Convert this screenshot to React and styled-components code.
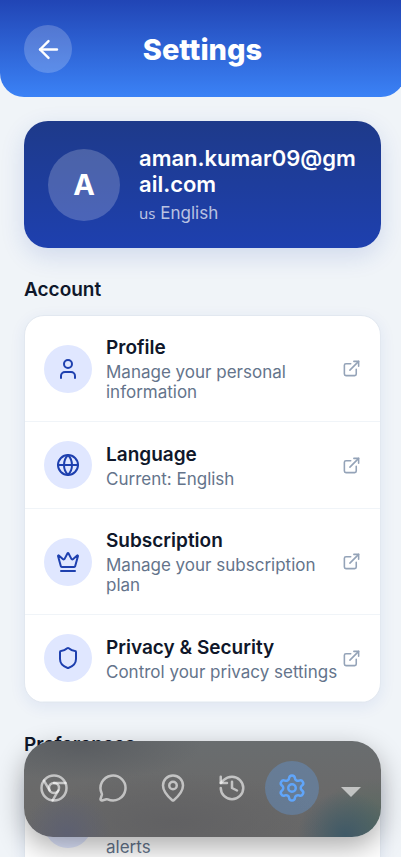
import React, { useState } from "react";
import styled, { createGlobalStyle } from "styled-components";
import {
  ArrowLeft,
  User,
  Globe,
  Crown,
  Shield,
  Bell,
  ExternalLink,
  MessageCircle,
  MapPin,
  History,
  Settings,
} from "lucide-react";

const GlobalStyle = createGlobalStyle`
  html {
    scrollbar-width: none;
  }

  body {
    margin: 0;
    overflow-x: hidden;
    background: #f0f4f8;
    font-family: Inter, "Liberation Sans", sans-serif;
    color: #0f172a;
  }

  * {
    box-sizing: border-box;
  }
`;

// the page bleeds slightly over the right edge of the window
const Page = styled.div`
  margin-right: -4px;
  padding-bottom: 140px;
`;

const Header = styled.header`
  display: grid;
  grid-template-columns: 48px 1fr 48px;
  align-items: center;
  padding: 25px 24px 24px;
  border-radius: 0 0 24px 24px;
  background: linear-gradient(#2145b5, #3b82f6);
`;

const Title = styled.h1`
  margin: 0;
  padding-top: 2px;
  font-size: 29px;
  line-height: 36px;
  font-weight: 800;
  text-align: center;
  color: white;
`;

const BackButton = styled.button`
  display: flex;
  align-items: center;
  justify-content: center;
  width: 48px;
  height: 48px;
  padding: 0;
  border: 0;
  border-radius: 50%;
  background: rgba(255, 255, 255, 0.2);
  color: white;
  cursor: pointer;
`;

const Content = styled.main`
  padding: 24px;
`;

const ProfileCard = styled.section`
  display: flex;
  align-items: center;
  gap: 19px;
  padding: 24px;
  border-radius: 24px;
  background: linear-gradient(#1e3a8a, #1e40af);
  box-shadow: 0 8px 24px rgba(30, 64, 175, 0.15);
  color: white;
`;

const Avatar = styled.div`
  display: flex;
  flex-shrink: 0;
  align-items: center;
  justify-content: center;
  width: 72px;
  height: 72px;
  border-radius: 50%;
  background: rgba(255, 255, 255, 0.2);
  font-size: 29px;
  font-weight: 700;
`;

const Email = styled.h2`
  margin: 0 0 5px;
  font-size: 22px;
  line-height: 26px;
  font-weight: 600;
  word-break: break-all;
`;

const Locale = styled.p`
  margin: 0;
  font-size: 17px;
  line-height: 22px;
  color: rgba(255, 255, 255, 0.7);
`;

const CountryCode = styled.span`
  font-family: "Noto Sans", sans-serif;
  font-size: 15px;
`;

const SectionTitle = styled.h2`
  margin: 30px 0 13px;
  font-size: 19px;
  line-height: 24px;
  font-weight: 600;
`;

const Card = styled.div`
  overflow: hidden;
  border: 1px solid #e2e8f0;
  border-radius: 20px;
  background: white;
  box-shadow: 0 4px 16px rgba(30, 64, 175, 0.08);
`;

const Row = styled.a`
  display: flex;
  align-items: center;
  padding: 19px;
  border-bottom: 1px solid #f0f4f8;
  color: inherit;
  text-decoration: none;
`;

const SwitchRow = styled(Row).attrs({ as: "label" })`
  cursor: pointer;
`;

const IconCircle = styled.span`
  display: flex;
  flex-shrink: 0;
  align-items: center;
  justify-content: center;
  width: 48px;
  height: 48px;
  margin-right: 14px;
  border-radius: 50%;
  background: #e0e7ff;
  color: #1e40af;
`;

const RowText = styled.span`
  display: flex;
  flex: 1;
  flex-direction: column;
  min-width: 0;
`;

const RowTitle = styled.span`
  padding-bottom: 1px;
  font-size: 19px;
  line-height: 26px;
  font-weight: 600;
`;

const RowDescription = styled.span`
  font-size: 17px;
  line-height: 20px;
  color: #64748b;
`;

const RowLink = styled(ExternalLink)`
  flex-shrink: 0;
  color: #94a3b8;
`;

const Switch = styled.input`
  display: flex;
  flex-shrink: 0;
  align-items: center;
  width: 48px;
  height: 24px;
  margin: 0;
  border-radius: 12px;
  appearance: none;
  background: #94a3b8;

  &::before {
    content: "";
    width: 24px;
    height: 24px;
    border-radius: 50%;
    background: white;
  }

  &:checked {
    justify-content: flex-end;
    background: #1e40af;
  }

  &:checked::before {
    background: #009688;
  }
`;

const TabBar = styled.nav`
  position: fixed;
  z-index: 10;
  left: 24px;
  right: 20px;
  bottom: 20px;
  display: flex;
  align-items: center;
  justify-content: space-between;
  height: 96px;
  padding: 0 3px 2px;
  border-radius: 29px;
  background:
    radial-gradient(48px 44px at 90% 98%, #3f5967, rgba(63, 89, 103, 0)),
    radial-gradient(60px 50px at 98% 90%, #56695f, rgba(86, 105, 95, 0)),
    radial-gradient(44px 40px at 12% 96%, #5d6071, rgba(93, 96, 113, 0)),
    radial-gradient(120px 36px at 16% 4%, #5a5d61, rgba(90, 93, 97, 0)),
    radial-gradient(150px 50px at 42% 85%, #616163, rgba(97, 97, 99, 0)),
    linear-gradient(#696d6f, #6a6a6a 50%, #686868);
  box-shadow: 0 10px 28px rgba(0, 0, 0, 0.33);
`;

const Tab = styled.button`
  display: flex;
  align-items: center;
  justify-content: center;
  width: 54px;
  height: 54px;
  padding: 0;
  border: 0;
  border-radius: 50%;
  background: ${(p) => (p.$active ? "rgba(96, 165, 250, 0.3)" : "none")};
  color: ${(p) => (p.$active ? "#60a5fa" : "rgba(255, 255, 255, 0.6)")};
  cursor: pointer;
`;

const ChromeIcon = () => (
  <svg
    width="30"
    height="30"
    viewBox="0 0 24 24"
    fill="none"
    stroke="currentColor"
    strokeWidth="2"
    strokeLinecap="round"
    strokeLinejoin="round"
  >
    <circle cx="12" cy="12" r="10" />
    <circle cx="12" cy="12" r="4" />
    <path d="M21.17 8H12" />
    <path d="M3.95 6.06 8.54 14" />
    <path d="M10.88 21.94 15.46 14" />
  </svg>
);

const CaretIcon = () => (
  <svg width="20" height="20" viewBox="0 0 20 20" fill="currentColor">
    <path d="M0 9h20L10 19z" />
  </svg>
);

const accountRows = [
  { icon: User, title: "Profile", text: "Manage your personal information" },
  { icon: Globe, title: "Language", text: "Current: English" },
  { icon: Crown, title: "Subscription", text: "Manage your subscription plan" },
  {
    icon: Shield,
    title: "Privacy & Security",
    text: "Control your privacy settings",
  },
];

function App() {
  const [notify, setNotify] = useState(true);

  return (
    <>
      <GlobalStyle />
      <Page>
        <Header>
          <BackButton aria-label="Back">
            <ArrowLeft size={29} />
          </BackButton>
          <Title>Settings</Title>
        </Header>

        <Content>
          <ProfileCard>
            <Avatar>A</Avatar>
            <div>
              <Email>aman.kumar09@gmail.com</Email>
              <Locale>
                <CountryCode>us</CountryCode> English
              </Locale>
            </div>
          </ProfileCard>

          <SectionTitle>Account</SectionTitle>
          <Card>
            {accountRows.map(({ icon: Icon, title, text }) => (
              <Row href="#" key={title}>
                <IconCircle>
                  <Icon size={24} />
                </IconCircle>
                <RowText>
                  <RowTitle>{title}</RowTitle>
                  <RowDescription>{text}</RowDescription>
                </RowText>
                <RowLink size={19} />
              </Row>
            ))}
          </Card>

          <SectionTitle>Preferences</SectionTitle>
          <Card>
            <SwitchRow>
              <IconCircle>
                <Bell size={24} />
              </IconCircle>
              <RowText>
                <RowTitle>Notifications</RowTitle>
                <RowDescription>Receive updates and alerts</RowDescription>
              </RowText>
              <Switch
                type="checkbox"
                checked={notify}
                onChange={(e) => setNotify(e.target.checked)}
              />
            </SwitchRow>
          </Card>
        </Content>
      </Page>

      <TabBar>
        <Tab aria-label="Browser">
          <ChromeIcon />
        </Tab>
        <Tab aria-label="Chat">
          <MessageCircle size={30} />
        </Tab>
        <Tab aria-label="Places">
          <MapPin size={30} />
        </Tab>
        <Tab aria-label="History">
          <History size={30} />
        </Tab>
        <Tab aria-label="Settings" $active>
          <Settings size={30} />
        </Tab>
        <Tab aria-label="More">
          <CaretIcon />
        </Tab>
      </TabBar>
    </>
  );
}

export default App;
